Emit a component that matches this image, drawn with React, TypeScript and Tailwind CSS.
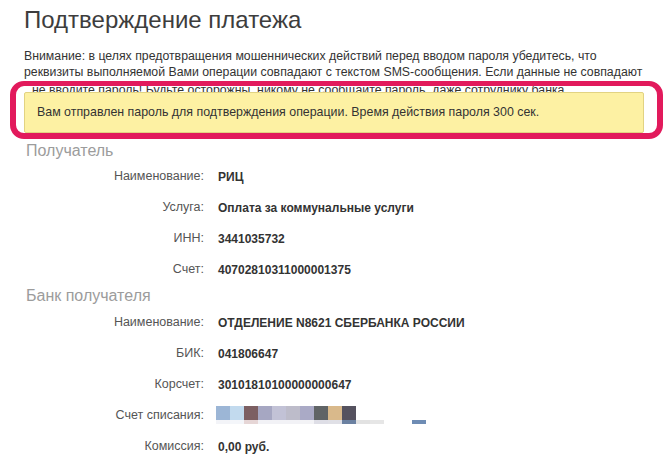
import React from "react";

const Row = ({ label, children }: { label: string; children: React.ReactNode }) => (
  <div className="flex h-[31px] items-center">
    <div className="w-[180px] text-right text-[12.5px] text-[#555555]">{label}</div>
    <div className="ml-[14px] text-[12px] font-bold text-[#333333]">{children}</div>
  </div>
);

const top = ["#9cb6d6", "#c2daee", "#7c5f62", "#a6a7c2", "#c2c2d6", "#bdbcca", "#aaaac6", "#606466", "#d9b98b", "#55525f"];
const bottom = ["#f3f4f8", "#f4f6fa", "#e6d6d6", "#f2f2f6", "#f2f2f6", "#f2f2f6", "#f3f3f6", "#dedee6", "#e0e0e6", "#6b81a1", "#e2e2e2", "#e6e6e6"];

const Mosaic = () => (
  <div className="flex flex-col pt-[6px]">
    <div className="flex h-[14px]">
      {top.map((c, i) => (
        <div key={i} className="h-[14px] w-[14px]" style={{ background: c }} />
      ))}
    </div>
    <div className="flex h-[4px]">
      {bottom.map((c, i) => (
        <div key={i} className="h-[4px] w-[14px]" style={{ background: c }} />
      ))}
      <div className="h-[4px] w-[28px]" />
      <div className="h-[4px] w-[14px] bg-[#6e8cb4]" />
    </div>
  </div>
);

export default function App() {
  return (
    <div className="relative h-[458px] w-[672px] overflow-hidden bg-white pl-6 font-['Liberation_Sans',Arial,sans-serif]">
      <h1 className="mt-1 h-8 whitespace-nowrap text-[24px] font-normal leading-8 text-[#3d3d3d]">
        Подтверждение платежа
      </h1>
      <div className="mt-3 whitespace-nowrap text-[12.3px] leading-4 text-[#333333]">
        <div>Внимание: в целях предотвращения мошеннических действий перед вводом пароля убедитесь, что</div>
        <div>реквизиты выполняемой Вами операции совпадают с текстом SMS-сообщения. Если данные не совпадают</div>
        <div className="mt-[2px] pl-[8px]">не вводите пароль! Будьте осторожны, никому не сообщайте пароль, даже сотруднику банка.</div>
      </div>
      <div className="relative -mt-[6px] flex h-[41px] w-[620px] items-center rounded-[2px] border border-[#e2d382] bg-[#fdf1a3] pl-[12px] text-[12.4px] text-[#333333]">
        Вам отправлен пароль для подтверждения операции. Время действия пароля 300 сек.
      </div>

      <div className="ml-[2px] mt-[7px] h-[21px] text-[16px] leading-[21px] text-[#9c9c9c]">Получатель</div>
      <Row label="Наименование:">РИЦ</Row>
      <Row label="Услуга:">Оплата за коммунальные услуги</Row>
      <Row label="ИНН:">3441035732</Row>
      <Row label="Счет:">40702810311000001375</Row>

      <div className="ml-[2px] h-[22px] text-[16px] leading-[22px] text-[#9c9c9c]">Банк получателя</div>
      <Row label="Наименование:">ОТДЕЛЕНИЕ N8621 СБЕРБАНКА РОССИИ</Row>
      <Row label="БИК:">041806647</Row>
      <Row label="Корсчет:">30101810100000000647</Row>
      <div className="flex h-[31px] items-start">
        <div className="flex h-[31px] w-[180px] items-center justify-end text-[12.5px] text-[#555555]">Счет списания:</div>
        <div className="ml-[12px] h-[31px]">
          <Mosaic />
        </div>
      </div>
      <Row label="Комиссия:">0,00 руб.</Row>

      <div className="absolute left-[10px] top-[81px] h-[58px] w-[653px] rounded-[14px] border-[6px] border-t-[5px] border-[#e21a5c]" />
    </div>
  );
}
